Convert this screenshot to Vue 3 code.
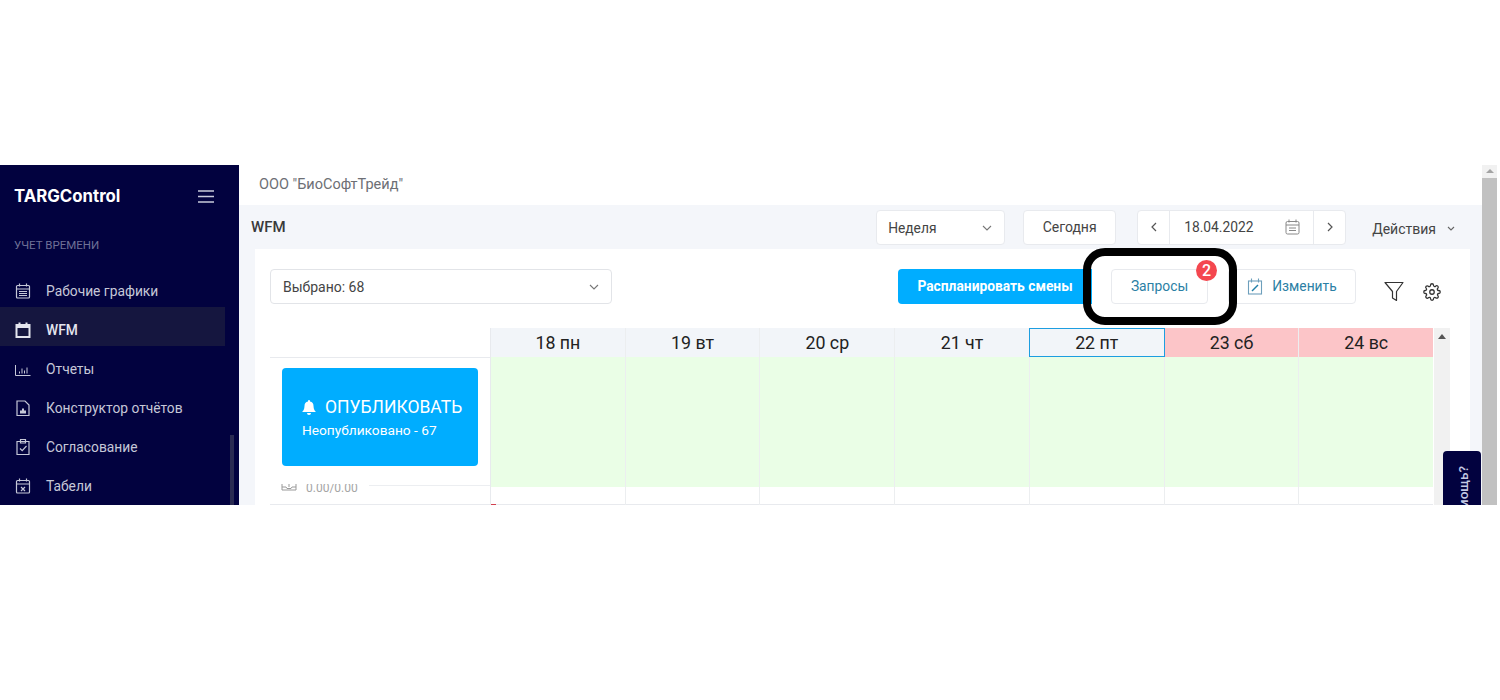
<script setup>
const nav = [
  { label: 'Рабочие графики', icon: 'sched' },
  { label: 'WFM', icon: 'cal', active: true },
  { label: 'Отчеты', icon: 'chart' },
  { label: 'Конструктор отчётов', icon: 'doc' },
  { label: 'Согласование', icon: 'check' },
  { label: 'Табели', icon: 'cross' },
]

const days = [
  { label: '18 пн' },
  { label: '19 вт' },
  { label: '20 ср' },
  { label: '21 чт' },
  { label: '22 пт', today: true },
  { label: '23 сб', weekend: true },
  { label: '24 вс', weekend: true },
]
</script>

<template>
  <div class="screen">
    <!-- sidebar -->
    <aside class="side">
      <div class="brand">
        <span>TARGControl</span>
        <svg width="16" height="13" viewBox="0 0 16 13" fill="none" stroke="#c9cbdc" stroke-width="1.4">
          <path d="M0 1h16M0 6.500h16M0 12h16" />
        </svg>
      </div>
      <div class="side-title">УЧЕТ ВРЕМЕНИ</div>
      <nav class="nav">
        <div v-for="item in nav" :key="item.label" class="nav-item" :class="{ 'nav-active': item.active }">
          <svg class="nav-icon" width="18" height="18" viewBox="0 0 18 18" fill="none" stroke="currentColor" stroke-width="1.2">
            <template v-if="item.icon === 'sched'">
              <rect x="2.500" y="3.500" width="13" height="12.500" rx="1" />
              <path d="M5.500 1.500v3M12.500 1.500v3M2.500 7h13M5 9.500h8M5 11.500h8M5 13.500h8" />
            </template>
            <template v-else-if="item.icon === 'cal'">
              <path stroke-width="2" d="M2.500 4h13v12h-13zM5.500 1.500v3M12.500 1.500v3" />
              <path stroke-width="2" d="M2.500 6h13" />
            </template>
            <template v-else-if="item.icon === 'chart'">
              <path stroke-width="1" d="M1.500 5v10.500h15M5.500 13.500v-2M8 13.500v-5M10.500 13.500v-3M13 13.500v-6" />
            </template>
            <template v-else-if="item.icon === 'doc'">
              <path d="M3 2h8l4 4v10.500H3z" />
              <path fill="currentColor" stroke="none" d="M6 11.500h2V9.500h2v2h2v3H6z" />
            </template>
            <template v-else-if="item.icon === 'check'">
              <path d="M3 3.500h12v13H3zM6.500 1.500h5v3.500h-5zM6 10.500l2.200 2.200L12.500 8" />
            </template>
            <template v-else>
              <rect x="2.500" y="3.500" width="13" height="12.500" rx="1" />
              <path d="M5.500 1.500v3M12.500 1.500v3M2.500 7h13M7 10l4 4M11 10l-4 4" />
            </template>
          </svg>
          <span>{{ item.label }}</span>
        </div>
      </nav>
      <div class="side-scroll"></div>
    </aside>

    <main class="main">
      <div class="org">ООО "БиоСофтТрейд"</div>

      <div class="subhead">
        <div class="page-title">WFM</div>
        <div class="tools">
          <div class="box select-week">
            <span>Неделя</span>
            <svg width="10" height="6" viewBox="0 0 10 6" fill="none" stroke="#777" stroke-width="1.1"><path d="M1 1l4 4 4-4" /></svg>
          </div>
          <div class="box today-btn">Сегодня</div>
          <div class="box datepick">
            <div class="arrow">
              <svg width="6" height="10" viewBox="0 0 6 10" fill="none" stroke="#555" stroke-width="1.2"><path d="M5 1L1 5l4 4" /></svg>
            </div>
            <div class="date">
              <span>18.04.2022</span>
              <svg width="15" height="16" viewBox="0 0 15 16" fill="none" stroke="#888" stroke-width="1"><rect x="1" y="2.500" width="13" height="12.500" rx="1.500" /><path d="M4 .5v3M11 .5v3M1 6h13M4 9h7M4 11.500h7" /></svg>
            </div>
            <div class="arrow">
              <svg width="6" height="10" viewBox="0 0 6 10" fill="none" stroke="#555" stroke-width="1.2"><path d="M1 1l4 4-4 4" /></svg>
            </div>
          </div>
          <div class="actions">
            <span>Действия</span>
            <svg width="8" height="5" viewBox="0 0 8 5" fill="none" stroke="#666" stroke-width="1.1"><path d="M1 1l3 3 3-3" /></svg>
          </div>
        </div>
      </div>

      <section class="card">
        <div class="card-top">
          <div class="box picked">
            <span>Выбрано: 68</span>
            <svg width="10" height="6" viewBox="0 0 10 6" fill="none" stroke="#777" stroke-width="1.1"><path d="M1 1l4 4 4-4" /></svg>
          </div>
          <div class="card-btns">
            <button class="plan">Распланировать смены</button>
            <button class="outline req">
              Запросы
              <span class="badge">2</span>
            </button>
            <button class="outline edit">
              <svg width="16" height="17" viewBox="0 0 16 17" fill="none" stroke="#6d9fbc" stroke-width="1.1"><rect x="1.500" y="3" width="13" height="13" /><path d="M4.500 .5v4M11.500 .5v4" /><path stroke="#1f7fa8" stroke-width="1.400" d="M5 13l6-6" /></svg>
              Изменить
            </button>
            <svg class="filter" width="20" height="21" viewBox="0 0 20 21" fill="none" stroke="#333" stroke-width="1.2" stroke-linejoin="round"><path d="M1 1.500h18l-6.500 9v9l-4-2.500v-6.500z" /></svg>
            <svg class="gear" width="18" height="18" viewBox="0 0 24 24" fill="none" stroke="#333" stroke-width="1.7"><circle cx="12" cy="12" r="3" /><path d="M19.400 15a1.650 1.650 0 0 0 .33 1.820l.06.06a2 2 0 1 1-2.830 2.830l-.06-.06a1.650 1.650 0 0 0-2.820 1.170V21a2 2 0 1 1-4 0v-.09A1.650 1.650 0 0 0 7.180 19.700l-.06.06a2 2 0 1 1-2.830-2.830l.06-.06A1.650 1.650 0 0 0 3.170 14H3a2 2 0 1 1 0-4h.09A1.650 1.650 0 0 0 4.300 7.180l-.06-.06a2 2 0 1 1 2.830-2.830l.06.06A1.650 1.650 0 0 0 10 3.170V3a2 2 0 1 1 4 0v.09a1.650 1.650 0 0 0 2.820 1.170l.06-.06a2 2 0 1 1 2.830 2.830l-.06.06A1.650 1.650 0 0 0 20.830 10H21a2 2 0 1 1 0 4h-.09a1.650 1.650 0 0 0-1.510 1z" /></svg>
          </div>
        </div>

        <div class="grid">
          <div class="left">
            <div class="left-head"></div>
            <div class="left-body">
              <div class="publish-wrap">
                <div class="publish">
                  <div class="pub-main">
                    <svg width="14" height="15" viewBox="0 0 14 15" fill="#fff"><path d="M7 0a1 1 0 0 1 1 1v.6A4.500 4.500 0 0 1 11.500 6c0 3.500 1.500 5 2.500 6H0c1-1 2.500-2.500 2.500-6A4.500 4.500 0 0 1 6 1.600V1a1 1 0 0 1 1-1zM5 13h4a2 2 0 0 1-4 0z" /></svg>
                    <span>ОПУБЛИКОВАТЬ</span>
                  </div>
                  <div class="pub-sub">Неопубликовано - 67</div>
                </div>
              </div>
              <!-- row scrolled under the button, only its lower part shows -->
              <div class="hours">
                <svg width="16" height="12" viewBox="0 0 16 12" fill="none" stroke="#999" stroke-width="1"><path d="M1 1v9h14V1M5 1h6M8 3v4M1 7h4l1 1.500h4L11 7h4" /></svg>
                <span>0.00/0.00</span>
                <i class="hours-rule"></i>
              </div>
            </div>
          </div>
          <div class="days">
            <div class="day-col" v-for="d in days" :key="d.label">
              <div class="day-head" :class="{ 'is-today': d.today, 'is-weekend': d.weekend }">{{ d.label }}</div>
              <div class="day-cell"></div>
              <div class="day-foot"></div>
            </div>
          </div>
          <div class="vscroll"><span class="vscroll-up"></span></div>
        </div>
      </section>

      <div class="help"><span>Нужна помощь?</span></div>
      <div class="ring"></div>
    </main>

    <div class="page-scroll"><span class="page-up"></span><span class="page-thumb"></span></div>
  </div>
</template>

<style>
html, body { background: #fff; overflow: hidden; }
</style>

<style scoped>
.screen {
  display: flex;
  height: 340px;
  width: 1497px;
  margin-top: 165px;
  overflow: hidden;
  font-family: Roboto, "Noto Sans", sans-serif;
  color: #333;
}

/* ── Sidebar ── */
.side {
  position: relative;
  width: 239px;
  flex: none;
  background: #02023f;
  color: #c6c8d8;
}

.brand {
  display: flex;
  justify-content: space-between;
  align-items: center;
  padding: 22px 25px 0 14px;
  color: #fff;
  font-family: Inter, Roboto, sans-serif;
  font-size: 16.800px;
  font-weight: 700;
  line-height: 18px;
}

.side-title {
  margin: 33px 0 0 14px;
  font-size: 11.500px;
  line-height: 14px;
  color: #6f7196;
}

.nav { margin-top: 16px; padding-right: 14px; }

.nav-item {
  display: flex;
  align-items: center;
  gap: 14px;
  height: 39px;
  padding: 7px 0 0 14px;
  box-sizing: border-box;
  font-size: 13.800px;
}

.nav-active {
  background: #15163f;
  color: #e4e5ee;
  font-weight: 500;
}

.nav-icon { flex: none; }

.side-scroll {
  position: absolute;
  left: 230px;
  top: 270px;
  width: 4px;
  height: 70px;
  background: #2a2b52;
}

/* ── Main ── */
.main {
  position: relative;
  flex: 1;
  min-width: 0;
  overflow: hidden;
  background: #f4f6fa;
}

.org {
  height: 40px;
  padding: 11px 0 0 20px;
  box-sizing: border-box;
  background: #fff;
  font-size: 14.500px;
  color: #6d6f75;
}

.subhead {
  display: flex;
  justify-content: space-between;
  align-items: center;
  height: 44px;
  padding: 0 27px 0 12px;
}

.page-title { font-size: 15px; font-weight: 500; color: #3a3a3a; }

.tools { display: flex; align-items: center; }

.box {
  display: flex;
  align-items: center;
  justify-content: space-between;
  box-sizing: border-box;
  background: #fff;
  border: 1px solid #e8eaee;
  border-radius: 4px;
  font-size: 14px;
  color: #444;
}

.select-week { width: 129px; height: 35px; padding: 1px 12px 0 11px; margin-right: 18px; font-size: 13.800px; }
.today-btn { width: 93px; height: 35px; justify-content: center; margin-right: 21px; }
.datepick { width: 209px; height: 35px; margin-right: 26px; }
.arrow { width: 31px; height: 100%; display: flex; align-items: center; justify-content: center; flex: none; }
.date {
  flex: 1;
  height: 100%;
  display: flex;
  align-items: center;
  justify-content: space-between;
  padding: 0 13px 0 14px;
  font-size: 13.800px;
  border-left: 1px solid #e8eaee;
  border-right: 1px solid #e8eaee;
}

.actions { display: flex; align-items: center; gap: 11px; padding-top: 3px; font-size: 14px; color: #444; }

/* ── Card ── */
.card {
  margin: 0 12px 0 16px;
  height: 270px;
  padding: 19px 20px 0 15px;
  box-sizing: border-box;
  background: #fff;
}

.card-top { display: flex; justify-content: space-between; align-items: center; height: 36px; }

.picked { width: 342px; height: 35px; padding: 1px 12px 0; border-color: #e2e4e8; }

.card-btns { display: flex; align-items: center; padding-right: 9px; }

.card-btns button { font-family: inherit; cursor: pointer; }

.plan {
  width: 194px;
  height: 35px;
  border: 0;
  border-radius: 4px 0 0 4px;
  background: #00adff;
  color: #fff;
  font-size: 13.800px;
  font-weight: 700;
}

.outline {
  height: 35px;
  background: #fff;
  border: 1px solid #e8eaee;
  border-radius: 4px;
  color: #2b7fa5;
  font-size: 13.800px;
}

.req { position: relative; width: 97px; margin-left: 19px; }

.badge {
  position: absolute;
  top: -10px;
  right: -10px;
  width: 21px;
  height: 21px;
  border-radius: 50%;
  background: #f4474f;
  color: #fff;
  font-size: 16px;
  font-weight: 500;
  line-height: 21px;
  text-align: center;
}

.edit {
  display: flex;
  align-items: center;
  justify-content: center;
  gap: 9px;
  width: 128px;
  margin-left: 20px;
}

.filter { margin-left: 28px; margin-top: 10px; }
.gear { margin-left: 19px; margin-top: 12px; }

/* ── Grid ── */
.grid { display: flex; margin-top: 24px; height: 192px; }

.left { width: 221px; flex: none; border-right: 1px solid #e8eaee; box-sizing: border-box; }
.left-head { height: 29px; border-bottom: 1px solid #e8eaee; }
.left-body { height: 146px; border-bottom: 1px solid #e8eaee; overflow: hidden; }

.publish-wrap { height: 126px; padding: 10px 0 0 12px; box-sizing: border-box; }

.publish {
  width: 196px;
  height: 98px;
  padding: 24px 0 0 20px;
  box-sizing: border-box;
  border-radius: 4px;
  background: #00adff;
  color: #fff;
}

.pub-main { display: flex; align-items: center; gap: 9px; font-size: 17.500px; line-height: 30px; }
.pub-sub { font-size: 13.700px; line-height: 18px; margin-top: -1px; }

.hours {
  display: flex;
  align-items: flex-start;
  gap: 9px;
  height: 20px;
  padding-left: 11px;
  overflow: hidden;
  font-size: 12px;
  line-height: 14px;
  color: #a5a5a5;
}

.hours svg { margin-top: -4px; flex: none; }
.hours span { margin-top: -3px; }
.hours-rule { flex: 1; margin: 1px 0 0 2px; height: 1px; background: #eceef1; }

.days { display: flex; width: 942px; flex: none; }

.day-col { flex: 1; display: flex; flex-direction: column; min-width: 0; border-right: 1px solid #eceef0; }
.day-col:last-child { border-right: 0; }
.day-col:first-child .day-foot { position: relative; }

.day-col:first-child .day-foot::after {
  content: '';
  position: absolute;
  left: 0;
  bottom: -1px;
  width: 5px;
  height: 1px;
  background: #d2404f;
}

.day-head {
  height: 29px;
  box-sizing: border-box;
  background: #f2f5f9;
  color: #222;
  font-size: 17.800px;
  font-weight: 450;
  line-height: 29px;
  text-align: center;
}

.is-today { margin: 0 -1px; border: 1px solid #1d9ee0; line-height: 27px; position: relative; }
.is-weekend { background: #fcc5c8; }

.day-cell { height: 130px; background: #eafee6; }
.day-foot { height: 17px; background: #fff; border-bottom: 1px solid #e8eaee; }

.vscroll { position: relative; width: 16px; flex: none; margin-left: 1px; height: 177px; background: #f1f1f1; }
.vscroll-up {
  position: absolute;
  left: 4px;
  top: 6px;
  border-left: 4px solid transparent;
  border-right: 4px solid transparent;
  border-bottom: 5px solid #555;
}

/* ── Overlays ── */
.help {
  position: absolute;
  left: 1204px;
  top: 286px;
  width: 38px;
  height: 80px;
  background: #02023f;
  border-radius: 4px 4px 0 0;
  overflow: hidden;
}

.help span {
  position: absolute;
  top: 15px;
  left: 12px;
  writing-mode: vertical-rl;
  transform: rotate(180deg);
  color: #c3c8e2;
  font-size: 13.500px;
  font-weight: 500;
  white-space: nowrap;
}

.ring {
  position: absolute;
  left: 844px;
  top: 83px;
  width: 154px;
  height: 77px;
  box-sizing: border-box;
  border: 8px solid #000;
  border-radius: 22px;
}

.page-scroll {
  position: relative;
  width: 15px;
  flex: none;
  background: #f1f1f1;
  padding-top: 13px;
  box-sizing: border-box;
}

.page-up {
  position: absolute;
  left: 4px;
  top: 4px;
  border-left: 4px solid transparent;
  border-right: 4px solid transparent;
  border-bottom: 4px solid #a3a3a3;
}

.page-thumb { display: block; height: 327px; background: #c1c1c1; }
</style>
